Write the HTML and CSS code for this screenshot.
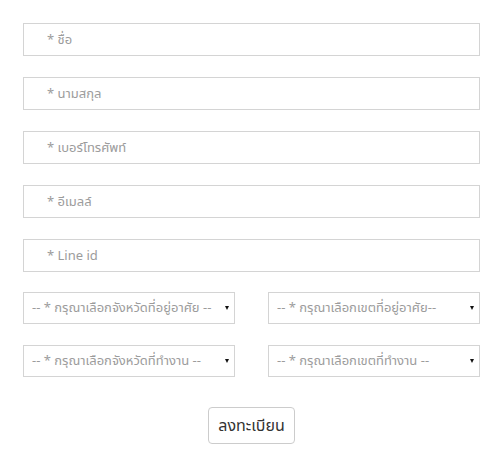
FILE: index.html
```html
<!DOCTYPE html>
<html lang="th">
<head>
<meta charset="utf-8">
<link rel="stylesheet" href="styles.css">
</head>
<body>
<form class="form">
  <input class="field" type="text" placeholder="* ชื่อ">
  <input class="field" type="text" placeholder="* นามสกุล">
  <input class="field" type="text" placeholder="* เบอร์โทรศัพท์">
  <input class="field" type="text" placeholder="* อีเมลล์">
  <input class="field field-last" type="text" placeholder="* Line id">
  <div class="row">
    <div class="sel"><select><option>-- * กรุณาเลือกจังหวัดที่อยู่อาศัย --</option></select></div>
    <div class="sel"><select><option>-- * กรุณาเลือกเขตที่อยู่อาศัย--</option></select></div>
  </div>
  <div class="row row-second">
    <div class="sel"><select><option>-- * กรุณาเลือกจังหวัดที่ทำงาน --</option></select></div>
    <div class="sel"><select><option>-- * กรุณาเลือกเขตที่ทำงาน --</option></select></div>
  </div>
  <div class="actions">
    <button type="button" class="btn">ลงทะเบียน</button>
  </div>
</form>
</body>
</html>
```
FILE: styles.css
```css
html, body {
  margin: 0;
  padding: 0;
  background: #fff;
}
body {
  font-family: "Noto Sans Thai", "Noto Sans Thai UI", "Open Sans", "Noto Sans", sans-serif;
}
.form {
  width: 457px;
  margin: 0;
  padding: 23px 0 0 23px;
  display: flex;
  flex-direction: column;
}
.field {
  box-sizing: border-box;
  width: 457px;
  height: 33px;
  margin: 0 0 21px 0;
  padding: 0 0 0 23px;
  border: 1px solid #d4d4d4;
  border-radius: 0;
  font-family: inherit;
  font-size: 13px;
  font-weight: 400;
  color: #555;
  outline: none;
}
.field::placeholder {
  color: #9c9c9c;
}
.field-last {
  margin-bottom: 20px;
}
.row {
  display: grid;
  grid-template-columns: 212px 212px;
  column-gap: 33px;
}
.row-second {
  margin-top: 21px;
}
.sel {
  position: relative;
}
.sel select {
  -webkit-appearance: none;
  appearance: none;
  box-sizing: border-box;
  width: 212px;
  height: 32px;
  padding: 0 16px 0 8px;
  border: 1px solid #d4d4d4;
  border-radius: 0;
  background: #fff;
  font-family: inherit;
  font-size: 13px;
  font-weight: 400;
  color: #9c9c9c;
  outline: none;
}
.sel::after {
  content: "";
  position: absolute;
  right: 6px;
  top: 14px;
  width: 0;
  height: 0;
  border-left: 2.5px solid transparent;
  border-right: 2.5px solid transparent;
  border-top: 4px solid #111;
  pointer-events: none;
}
.actions {
  display: flex;
  justify-content: center;
  margin-top: 30px;
}
.btn {
  box-sizing: border-box;
  width: 87px;
  height: 37px;
  border: 1px solid #ccc;
  border-radius: 4px;
  background: #fff;
  font-family: inherit;
  font-size: 16px;
  font-weight: 400;
  color: #333;
  padding: 0;
}
```
